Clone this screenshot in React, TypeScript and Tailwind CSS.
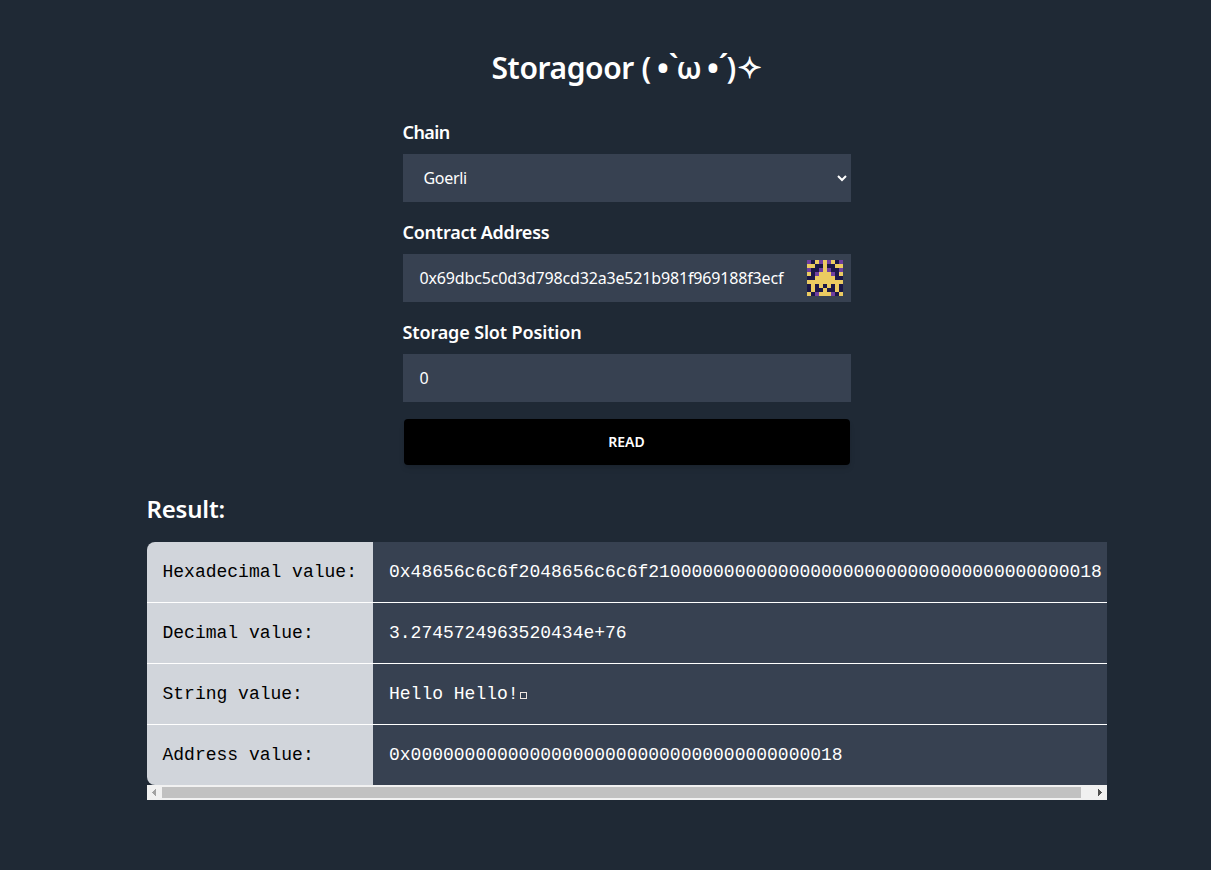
import type { ReactNode } from "react";

const IDENTICON = [
  "pd.p.p.dp",
  "..dd.dd..",
  "pddp.pddp",
  ".dp...pd.",
  "dd.....dd",
  ".........",
  "d.d.d.d.d",
  "d.dd.dd.d",
  ".dp...pd.",
];

const ROWS = [
  { label: "Hexadecimal value:", value: "0x48656c6c6f2048656c6c6f21" + "0".repeat(38) + "18" },
  { label: "Decimal value:", value: "3.2745724963520434e+76" },
  { label: "String value:", value: "Hello Hello!", box: true },
  { label: "Address value:", value: "0x" + "0".repeat(38) + "18" },
];

function Identicon() {
  return (
    <svg width="36" height="36" viewBox="0 0 9 9" shapeRendering="crispEdges">
      <rect width="9" height="9" fill="#ebcb61" />
      {IDENTICON.flatMap((row, y) =>
        row.split("").map((c, x) =>
          c === "." ? null : (
            <rect key={`${x}-${y}`} x={x} y={y} width="1" height="1" fill={c === "d" ? "#1b1748" : "#6f3fa0"} />
          )
        )
      )}
    </svg>
  );
}

function Field({ label, spacing, children }: { label: string; spacing: string; children: ReactNode }) {
  return (
    <div className="mb-4 h-[84px]">
      <div className={`mb-2 -ml-[0.5px] h-7 text-lg leading-7 font-semibold text-white ${spacing}`}>{label}</div>
      <div className="flex h-12 items-center bg-[#374151] pl-4 text-base text-white">{children}</div>
    </div>
  );
}

export default function App() {
  return (
    <div className="h-[870px] w-[1211px] overflow-hidden bg-[#1f2935] pt-12 pl-[147px] font-['Noto_Sans','DejaVu_Sans',sans-serif]">
      <div className="w-[960px]">
        <h1 className="mb-[34px] flex h-9 justify-center text-3xl leading-[40px] font-semibold whitespace-pre text-white">
          <span className="w-[150px] tracking-[-0.4px]">Storagoor</span>
          <span className="w-[14px]">(</span>
          <span className="w-[15px] text-center text-[34px]">•</span>
          <span className="-mt-0.5 w-[6px]">
            <span className="-ml-0.5">`</span>
          </span>
          <span className="w-[25px] text-center">ω</span>
          <span className="ml-1 w-[15px] text-center text-[34px]">•</span>
          <span className="-mt-0.5 w-[6px]">
            <span className="-ml-0.5">´</span>
          </span>
          <span className="w-[12px]">)</span>
          <span className="-mt-px -ml-px w-[25px] text-[29px] [-webkit-text-stroke:1px_white]">✧</span>
        </h1>
        <div className="mx-auto w-[448px]">
          <Field label="Chain" spacing="tracking-[-0.6px]">
            <span className="ml-[4.5px] flex-1 tracking-[-0.3px]">Goerli</span>
            <svg className="mr-1" width="10" height="8" viewBox="0 0 10 8" fill="none" stroke="white" strokeWidth="2">
              <path d="M1 2 5 6 9 2" />
            </svg>
          </Field>
          <Field label="Contract Address" spacing="tracking-[-0.24px]">
            <span className="ml-[0.5px] flex-1 tracking-[-0.16px]">0x69dbc5c0d3d798cd32a3e521b981f969188f3ecf</span>
            <div className="mr-2">
              <Identicon />
            </div>
          </Field>
          <Field label="Storage Slot Position" spacing="tracking-[-0.14px]">
            <span className="ml-[0.5px]">0</span>
          </Field>
          <button className="mx-px mt-[17px] block h-[46px] w-[446px] rounded bg-black pr-px text-sm font-semibold text-white shadow-md">
            READ
          </button>
        </div>
        <h2 className="mt-7 mb-[17px] -ml-[0.5px] h-8 text-2xl leading-8 font-semibold tracking-[-0.2px] text-white">
          Result:
        </h2>
        <div className="h-[243px] overflow-hidden rounded-l-lg font-['Liberation_Mono',monospace] text-lg">
          {ROWS.map((row, i) => (
            <div key={row.label} className={`flex whitespace-nowrap ${i ? "h-[61px] border-t border-white" : "h-[60px]"}`}>
              <div className="flex w-[226px] shrink-0 items-center bg-[#d1d5db] pl-[15.5px] text-black">{row.label}</div>
              <div className="flex flex-1 items-center bg-[#374151] pl-4 text-white">
                {row.value}
                {row.box && <span className="mt-[3px] ml-px h-[7px] w-[7px] border border-[#eee6e0]" />}
              </div>
            </div>
          ))}
        </div>
        <div className="flex h-[15px] items-center bg-[#f1f1f1]">
          <svg width="15" height="15" shapeRendering="crispEdges">
            <path d="M9 4v7L5 7.5z" fill="#a3a3a3" />
          </svg>
          <div className="h-[11px] w-[919px] bg-[#c1c1c1]" />
          <svg className="ml-auto" width="15" height="15" shapeRendering="crispEdges">
            <path d="M6 4v7l4-3.5z" fill="#505050" />
          </svg>
        </div>
      </div>
    </div>
  );
}
